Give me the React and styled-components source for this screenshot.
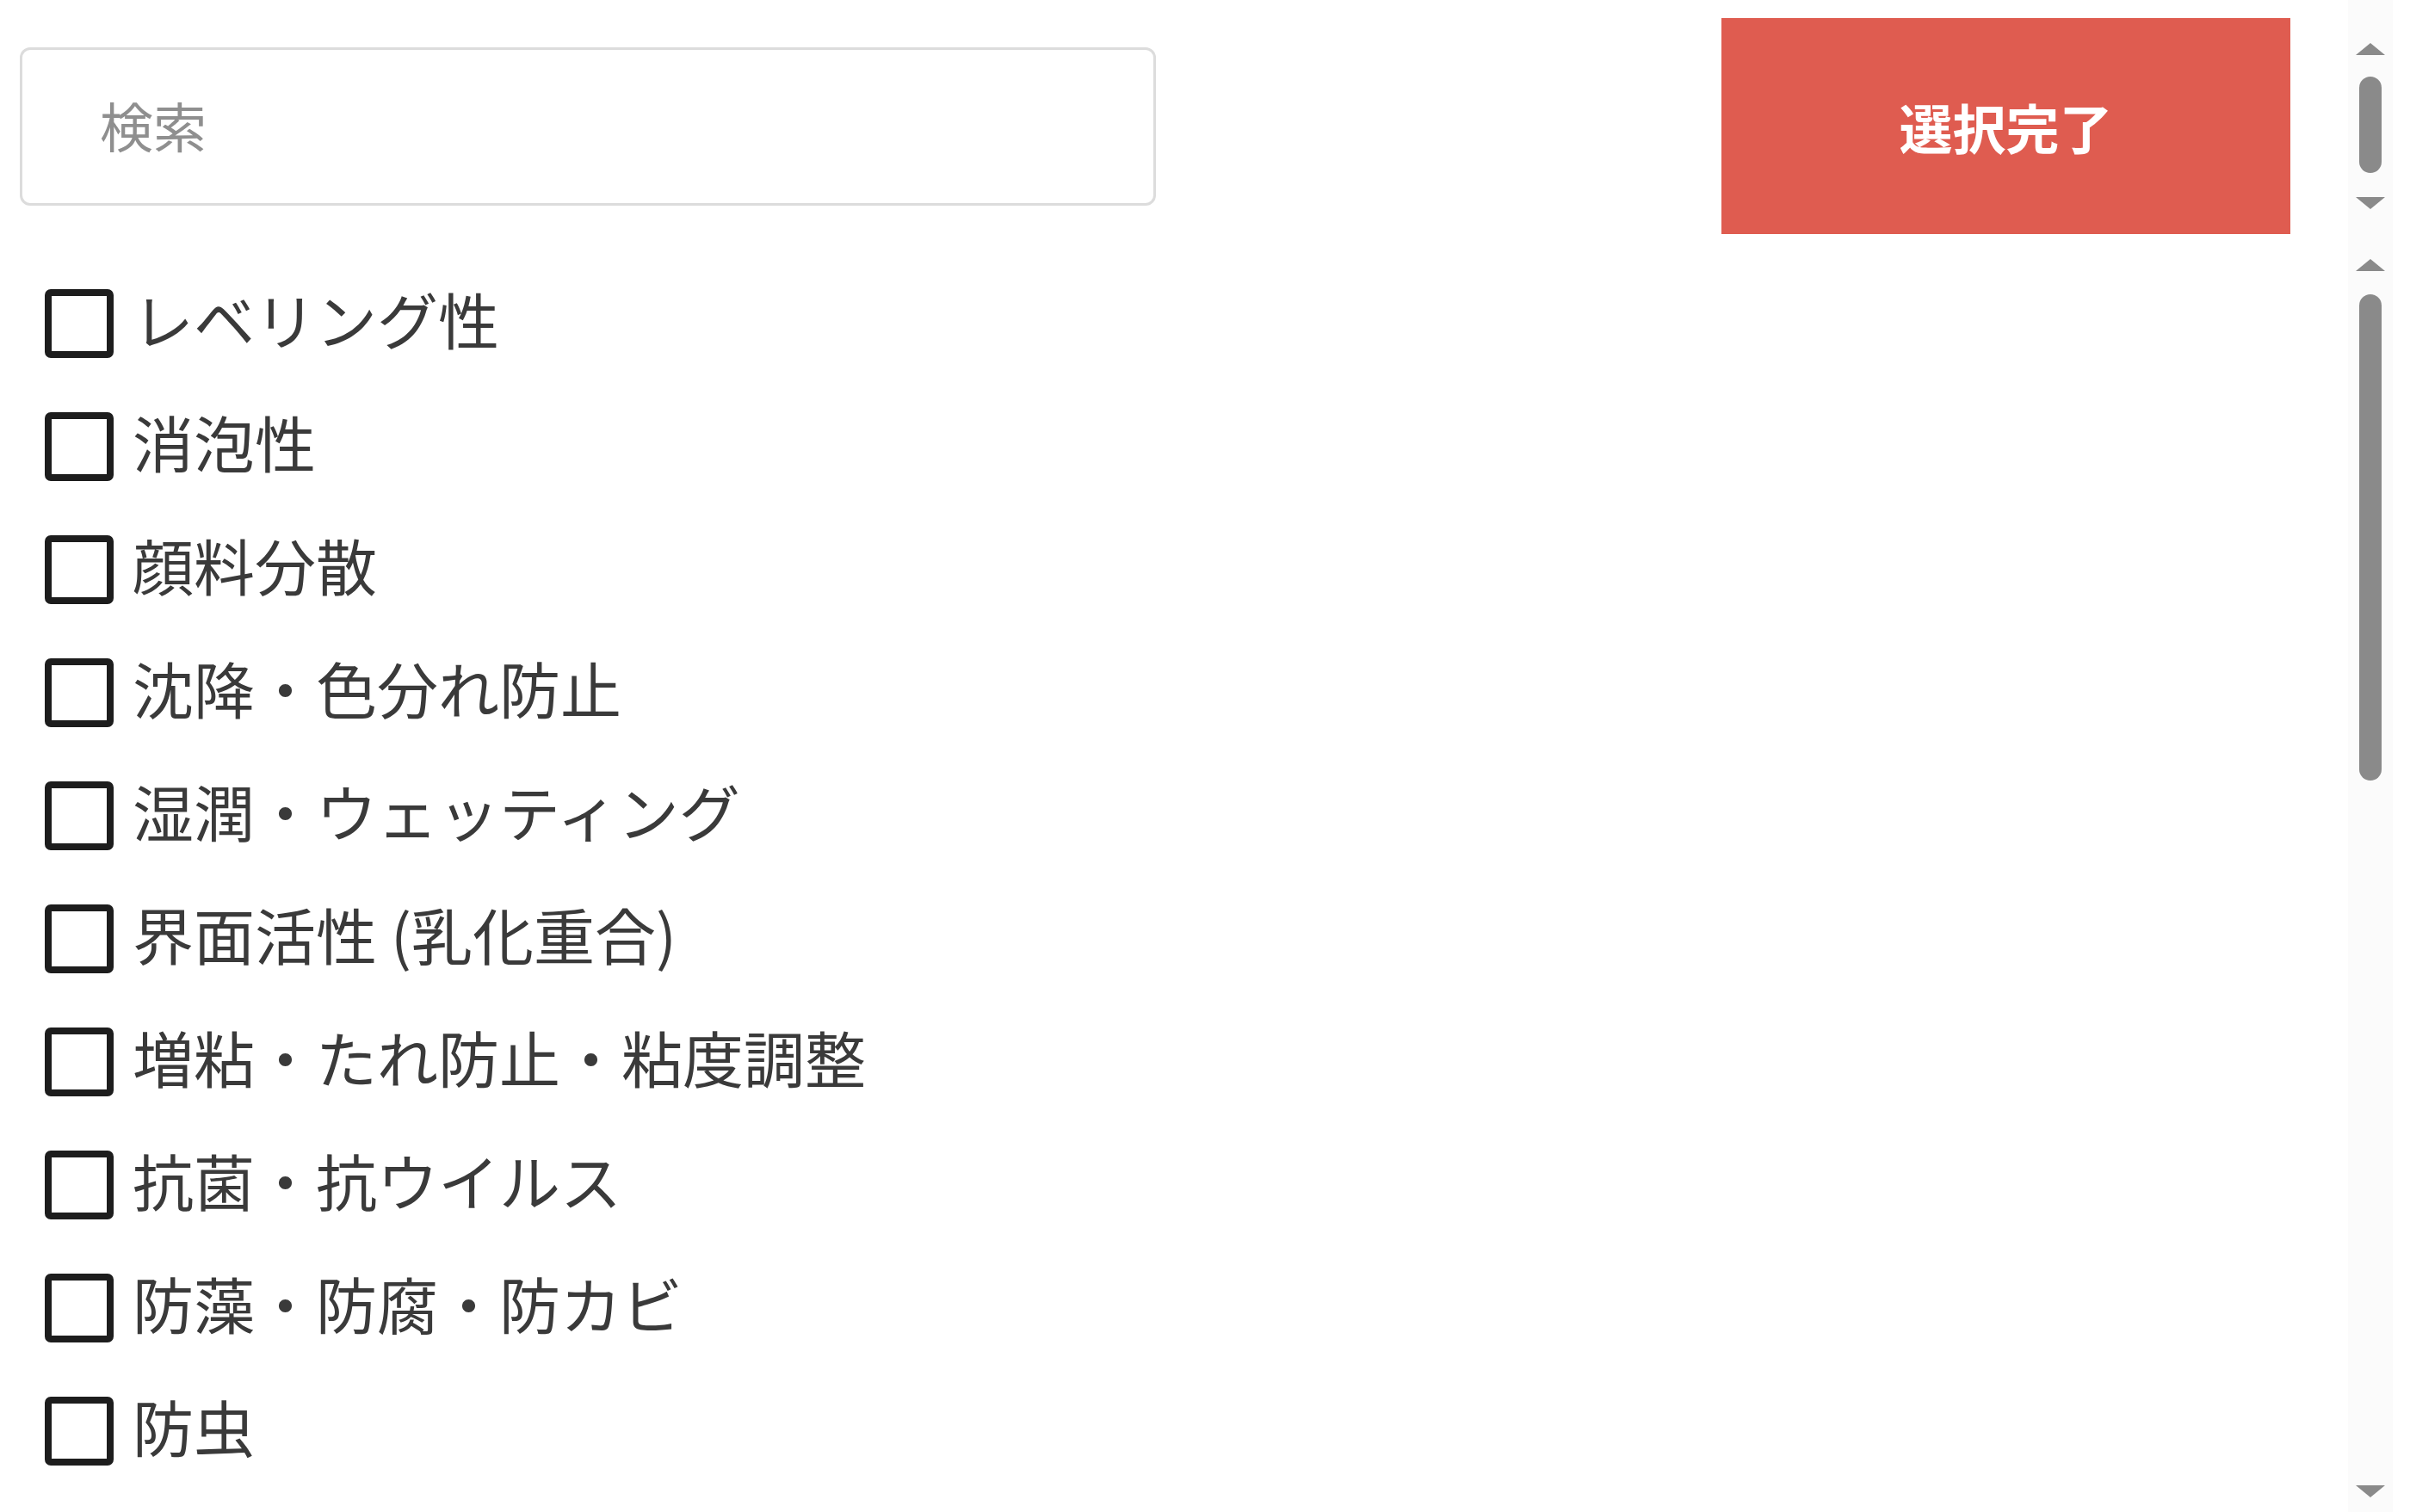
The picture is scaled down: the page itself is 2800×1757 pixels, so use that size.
import React from 'react';
import styled, { createGlobalStyle } from 'styled-components';

const GlobalStyle = createGlobalStyle`
    html, body {
        margin:0;
        padding:0;
        background:white;
    }
    body{
        font-family: "Noto Sans CJK JP", "Noto Sans", sans-serif;
    }
`

const Page = styled.div`
    width:2800px;
    height:1757px;
    display:flex;
    flex-direction:column;
    overflow:hidden;
`

const Pane = styled.div`
    display:flex;
    height:${props => props.height}px;
    flex-shrink:0;
`

const Toolbar = styled.div`
    flex:1;
    display:flex;
    justify-content:space-between;
    align-items:flex-start;
    padding: 0 67px 0 23px;
`

const SearchInput = styled.input`
    width:1320px;
    height:184px;
    margin-top:55px;
    box-sizing:border-box;
    border:3px solid #dcdcdc;
    border-radius:12px;
    padding: 0 0 4px 90px;
    outline:none;
    font-family:inherit;
    font-size:62px;
    color:#333;
    background:white;
    &::placeholder{
        color:#8f8f8f;
    }
`

const DoneButton = styled.button`
    width:661px;
    height:251px;
    margin-top:21px;
    border:none;
    background:#df5c50;
    color:white;
    font-family:inherit;
    font-weight:bold;
    font-size:62px;
    cursor:pointer;
`

const RailColumn = styled.div`
    width:52px;
    margin-right:20px;
    background:#fbfbfb;
    display:flex;
    flex-direction:column;
    align-items:center;
    box-sizing:border-box;
    padding:${({ top }) => top}px 0 ${({ bottom }) => bottom}px;
`

const Track = styled.div`
    flex:1;
    width:26px;
    padding-top:${({ offset }) => offset}px;
    box-sizing:border-box;
`

const Thumb = styled.div`
    width:26px;
    height:${({ size }) => size}px;
    border-radius:13px;
    background:#8a8a8a;
`

const ArrowIcon = styled.svg`
    display:block;
    width:34px;
    height:16px;
    fill:#8a8a8a;
`

const List = styled.div`
    flex:1;
    display:flex;
    flex-direction:column;
    padding: 4px 0 0 52px;
    overflow:hidden;
`

const Row = styled.label`
    display:flex;
    align-items:center;
    gap:22px;
    height:143px;
    flex-shrink:0;
    cursor:pointer;
`

const Box = styled.input`
    appearance:none;
    margin:0;
    width:80px;
    height:80px;
    box-sizing:border-box;
    border:8px solid #1d1d1d;
    border-radius:7px;
    background:white;
    flex-shrink:0;
`

const Label = styled.span`
    font-size:71px;
    color:#3a3a3a;
    white-space:nowrap;
    padding-bottom:14px;
`

const items = [
    'レベリング性',
    '消泡性',
    '顔料分散',
    '沈降・色分れ防止',
    '湿潤・ウェッティング',
    '界面活性 (乳化重合)',
    '増粘・たれ防止・粘度調整',
    '抗菌・抗ウイルス',
    '防藻・防腐・防カビ',
    '防虫',
]

function Arrow({ down }) {
    return (
        <ArrowIcon viewBox="0 0 34 16">
            {down
                ? <polygon points="0,2 34,2 17,16" />
                : <polygon points="0,14 17,0 34,14" />}
        </ArrowIcon>
    )
}

function Rail({ top, bottom, offset, size }) {
    return (
        <RailColumn top={top} bottom={bottom}>
            <Arrow />
            <Track offset={offset}>
                <Thumb size={size} />
            </Track>
            <Arrow down />
        </RailColumn>
    )
}

export default function App() {
    return (
        <Page>
            <GlobalStyle />
            <Pane height={300}>
                <Toolbar>
                    <SearchInput type="text" placeholder="検索" />
                    <DoneButton>選択完了</DoneButton>
                </Toolbar>
                <Rail top={50} bottom={57} offset={23} size={112} />
            </Pane>
            <Pane height={1457}>
                <List>
                    {items.map(item => (
                        <Row key={item}>
                            <Box type="checkbox" />
                            <Label>{item}</Label>
                        </Row>
                    ))}
                </List>
                <Rail top={1} bottom={17} offset={25} size={565} />
            </Pane>
        </Page>
    )
}
